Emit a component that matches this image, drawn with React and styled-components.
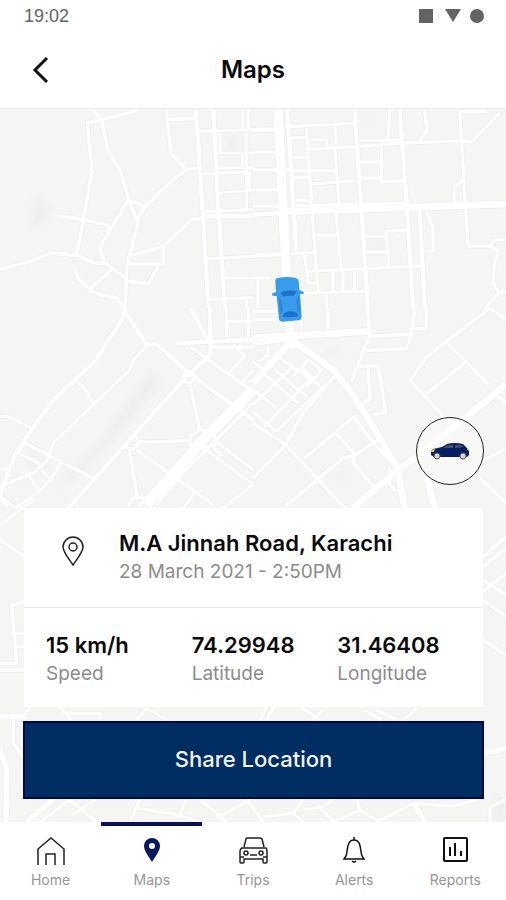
import React from "react";
import styled, { createGlobalStyle } from "styled-components";

const GlobalStyle = createGlobalStyle`
  * {
    box-sizing: border-box;
  }

  body {
    margin: 0;
    background: #fff;
    color: #0b0b0b;
    font-family: Inter, "Open Sans", sans-serif;
  }
`;

const Screen = styled.div`
  display: flex;
  flex-direction: column;
  min-height: 100vh;
`;

const StatusBar = styled.div`
  display: flex;
  justify-content: space-between;
  align-items: center;
  height: 32px;
  padding: 0 20px 0 24px;
  color: #636363;
  font: 18px "Liberation Sans", sans-serif;
`;

const Header = styled.header`
  display: grid;
  grid-template-columns: 48px 1fr 48px;
  align-items: center;
  height: 77px;
  padding: 0 16px;
  border-bottom: 1px solid #ececec;
`;

const BackButton = styled.button`
  display: flex;
  justify-content: center;
  align-items: center;
  height: 48px;
  padding: 0;
  border: 0;
  background: none;
`;

const Title = styled.h1`
  margin: 0;
  font-size: 24px;
  font-weight: 600;
  line-height: 32px;
  text-align: center;
`;

const MapArea = styled.main`
  position: relative;
  display: flex;
  flex: 1;
  flex-direction: column;
  justify-content: flex-end;
  min-height: 560px;
  padding: 0 22px 23px 23px;
  background: #f5f6f4;
`;

const MapCanvas = styled.svg`
  position: absolute;
  top: 0;
  left: 0;
  width: 100%;
  height: 100%;
`;

const VehicleButton = styled.button`
  position: relative;
  align-self: flex-end;
  display: flex;
  justify-content: center;
  align-items: center;
  width: 68px;
  height: 68px;
  margin-bottom: 23px;
  padding: 0;
  border: 1px solid #222;
  border-radius: 50%;
  background: rgba(255, 255, 255, 0.3);
`;

const Card = styled.section`
  position: relative;
  margin: 0 1px 14px;
  background: #fff;
`;

const Place = styled.div`
  display: flex;
  align-items: flex-start;
  height: 100px;
  padding: 20px 22px;
  border-bottom: 1px solid #ececec;
`;

const PlaceIcon = styled.div`
  width: 73px;
  padding: 8px 0 0 16px;
`;

const Stats = styled.dl`
  display: grid;
  grid-template-columns: repeat(3, 1fr);
  height: 99px;
  margin: 0;
  padding: 22px 0 0 22px;
`;

const Stat = styled.div`
  display: flex;
  flex-direction: column-reverse;
  justify-content: flex-end;
`;

const Name = styled.h2`
  margin: 0;
  font-size: 22px;
  font-weight: 600;
  line-height: 30px;
`;

const Value = styled.dd`
  margin: 0;
  font-size: 22px;
  font-weight: 600;
  line-height: 30px;
`;

const Label = styled.dt`
  color: #8c8c8c;
  font-size: 19px;
  line-height: 28px;
`;

const Time = styled.p`
  margin: 0;
  color: #8c8c8c;
  font-size: 19px;
  line-height: 28px;
`;

const ShareButton = styled.button`
  position: relative;
  height: 78px;
  padding: 0 0 2px;
  border: 2px solid #00064f;
  background: #002d62;
  color: #f1f4fb;
  font-family: inherit;
  font-size: 22px;
  font-weight: 500;
`;

const Nav = styled.nav`
  position: relative;
  display: grid;
  grid-template-columns: repeat(5, 1fr);
  height: 78px;
  background: #fff;
`;

const NavLink = styled.a`
  display: flex;
  flex-direction: column;
  align-items: center;
  padding-top: 10px;
  border-top: 4px solid ${props => (props.$active ? "#0b1157" : "transparent")};
  color: #969696;
  font-size: 14px;
  line-height: 20px;
  text-decoration: none;

  svg {
    margin-bottom: 4px;
  }
`;

// Streets are kept per tile, each with its own origin on the map.
const tiles = [
  {
    x: 0,
    y: 0,
    roads: [
      [10, "M410 8L304 36L262 44L276 190L250 335L230 440M280 8L304 36L325 130L362 190L386 275L408 330L414 345L380 475L376 600M180 324L250 335L320 350L330 360M386 275L298 420L315 465L376 510M395 278L434 296L412 335M0 484L75 465L155 435L230 442L282 466L315 465M225 484L235 510L268 545L300 560L350 570L374 600M268 545L335 485M500 8L512 135L560 185L600 180M504 34L588 32M560 185L525 210L434 296M390 444L490 415L575 335L610 330M490 415V468H384M475 475L446 527L384 520"],
      [12, "M588 8L608 310L625 600M640 8L655 300L675 600M608 325H760"],
      [8, "M596 70L760 65M727 8V60M745 8V60M660 78V130M738 80L740 300M655 135H760M655 180L760 178M605 198L745 192M655 255L760 246M608 312L760 304M620 452L760 445M675 510H760M630 575L760 568M740 575V600M728 135V178M748 192V246"]
    ]
  },
  {
    x: 759,
    y: 0,
    roads: [
      [28, "M75 8L90 300L112 720"],
      [20, "M85 311L470 298L759 288"],
      [12, "M103 8L130 430M305 8L325 300L345 600M440 8L462 295L480 600M0 66L75 64M0 320L85 316M0 443L100 438M500 305L515 600"],
      [9, "M95 56L305 46M160 60L195 550M245 56L250 115M210 95H175M220 95V120M110 90L165 88M165 124L310 116L440 106L625 98L655 102L740 15M410 8L405 100M320 98L440 96M515 8L522 68L498 100M620 8L645 415L712 414L725 395H759M625 10H700M120 150L170 148M115 188L245 188M245 125L260 300M120 208H170M175 228L300 218M125 278H175M320 162H385M385 118V222L455 218M320 210H385M130 293L460 286M630 210L602 245L604 285M520 310L540 355V430H515M190 382H255M250 318L265 485M115 438L190 432M155 440L165 525H190M165 490L505 474M335 385H400V370L460 366M400 380L408 475M340 432H400M240 490V550M270 490V550M305 488V550M150 556L340 550M220 560V600M712 414L738 432L725 460L720 520L738 555L759 550M738 555L695 600M0 132H75M0 185H115M0 245H75M0 295H80M0 510H50M15 510V600"]
    ]
  },
  {
    x: 0,
    y: 600,
    roads: [
      [12, "M374 0L368 30L285 160L160 275L95 365L45 440L0 560M374 8L440 110L470 108L565 195L759 335M530 106L759 95M565 200L205 600M630 0L632 140L565 200M572 0L625 100"],
      [32, "M759 245L610 395L440 590"],
      [9, "M440 115L405 150L385 190L280 290L160 405L140 460L100 495L0 535M228 215L260 250L282 290M0 326L25 324L95 362M70 402L285 515M50 432L125 470M75 402L55 435M125 485L150 515L120 550L45 600M80 495L115 545M185 460L150 520M0 482H25M0 565L40 595M570 230L600 370M420 402L565 398M410 425L640 590M388 425L412 570M572 118L759 250M632 118H759M680 200L735 145L700 110M720 230L759 185M680 0V90M745 0V90M680 40H759M759 285L545 500L470 590M735 290L540 460L420 590M640 395L759 485M610 420L759 530L670 600M550 600L585 555M640 420L665 440L650 450M570 385L600 365L640 375L650 410L610 420L570 410ZM390 395L405 382L418 402L400 425L375 418ZM550 200L570 190L590 205L570 225L548 220ZM385 590L400 570L440 570L445 590"]
    ]
  },
  {
    x: 759,
    y: 600,
    roads: [
      [20, "M115 95L240 185L285 240L345 330L435 485L455 600M0 90L350 70M115 100L0 225M435 485L300 600M435 485L500 440L759 230M520 500L545 600"],
      [10, "M345 0L350 82L295 220M0 108L115 95M350 85L475 78L485 0M520 0V62H485M475 80L460 122L340 128M320 175L375 172L398 312L362 320M345 180L352 270L330 285M710 0L578 102L515 152L472 218L590 345M580 102L705 228M635 165L520 258M710 0L759 35M735 265L759 285M245 205L150 315L98 410L0 510M0 345L98 410L275 600M98 595L270 450L300 445L375 395M155 450L310 320M250 375L305 440L300 462L360 535M300 325L345 385L435 485M410 480V530L430 550M670 470L759 420M670 500L759 585"],
      [9, "M0 290L120 175M35 355L180 205M70 370L245 205M75 145L215 245M30 195L135 285M0 245L70 300M0 160L35 190M0 310L70 370M65 185L165 270M45 120V140L20 160M120 205L165 155L205 185L165 235M145 180L185 215M70 145L110 105M145 0V75M225 0V75M0 35H75M0 10H80"]
    ]
  },
  {
    x: 0,
    y: 1176,
    roads: [
      [10, "M0 120L75 170M0 75L100 0M35 315L50 490H0M35 315L75 305M45 400H75M50 440H75M1450 170L1518 110M1450 200L1518 145M1450 240L1518 285M1450 275L1518 220M1450 300L1518 350M1450 420L1518 465M0 510H75M0 0L25 20"]
    ]
  },
  {
    x: 0,
    y: 1776,
    roads: [
      [16, "M0 150L20 205L18 366M80 366L160 298M1240 310L1275 366M1450 160L1518 145M0 50H75"],
      [9, "M40 50V130L75 180M75 45L90 20M180 20L215 60M185 40H300V60M410 60L440 25L505 60M780 60L800 20M800 60L820 20M900 20L960 60M940 60L970 30M1090 30L1145 60M1130 30L1190 60M1210 60L1250 25M120 366L210 300L290 366M215 345L290 298M390 366L420 298M415 325L540 345L560 298M530 345L600 366M600 298L680 366M650 355L750 298M740 300L790 366M790 350L880 340L910 298M880 340L910 366M910 330L960 320L1000 366M970 320L1000 298M1000 366L1080 330L1070 298M1080 330L1140 366M1130 366L1240 310L1360 318L1440 298M1470 366V320L1518 298"]
    ]
  }
];

const stats = [
  { label: "Speed", value: "15 km/h" },
  { label: "Latitude", value: "74.29948" },
  { label: "Longitude", value: "31.46408" }
];

const renderRoads = (color, extraWidth) =>
  tiles.map(tile => (
    <g
      key={`${tile.x}-${tile.y}`}
      stroke={color}
      transform={`translate(${tile.x} ${tile.y})`}
    >
      {tile.roads.map(([width, d]) => (
        <path key={d} d={d} strokeWidth={width + extraWidth} />
      ))}
    </g>
  ));

const StreetMap = () => (
  <MapCanvas
    viewBox="0 3 1518 2139"
    preserveAspectRatio="xMidYMax slice"
    aria-hidden="true"
  >
    <defs>
      <filter id="haze" x="-50%" y="-50%" width="200%" height="200%">
        <feGaussianBlur stdDeviation="12" />
      </filter>
    </defs>
    <g fill="#eceeed" filter="url(#haze)">
      <path d="M105 260L160 300L90 370Z" />
      <path d="M455 785L485 820L330 1000L220 1110L160 1150L300 1000Z" />
      <path d="M680 95H720V120H680ZM1090 15H1120V30H1090ZM1115 400H1150V420H1115ZM980 730L1010 725L1015 745L985 750ZM1010 1095H1040V1115H1010Z" />
      <path d="M1480 2070H1518V2142H1480ZM75 1060L130 1040L110 1090Z" />
    </g>
    <g fill="none" strokeLinejoin="round">
      {renderRoads("#eff1ef", 6)}
      {renderRoads("#fff", 0)}
    </g>
    <g transform="translate(813 504)">
      <path d="M13 12Q14 6 24 5Q50 1 72 5Q81 6 83 14L85 42L98 48V54L87 54L92 122Q91 132 82 133L36 137Q25 137 24 128L17 60L4 59V52L15 48Z" fill="#389ced" />
      <path d="M28 50Q50 40 78 46L67 60Q50 57 38 62Z" fill="#1b72c8" />
      <path d="M34 122Q38 108 56 106Q76 105 84 120Q58 126 34 122Z" fill="#1b72c8" />
      <path d="M22 62L33 76L35 106L28 116ZM84 58L76 72L79 102L87 112Z" fill="#2a88de" />
    </g>
  </MapCanvas>
);

const CarPicture = () => (
  <svg width="40" height="18" viewBox="0 0 40 18">
    <path d="M1 9L3 7L12 5L17 2Q24 0 33 2L37 6L39 9V13L37 15H4L1 13Z" fill="#061d63" />
    <path d="M14 5L18 3H23V6H14ZM25 3H31L34 5L25 6Z" fill="#49505e" />
    <path d="M1 8L5 7L4 10L1 10ZM37 6L39 8H37Z" fill="#e4c251" />
    <g fill="#d8d8d8" stroke="#555" strokeWidth="1">
      <circle cx="7" cy="14" r="3" />
      <circle cx="33" cy="14" r="3" />
    </g>
  </svg>
);

const icons = {
  home: (
    <path d="M2 29V13L15 2L28 13V29M10 29V18H19V29" fill="none" stroke="#222" strokeWidth="1.5" />
  ),
  maps: (
    <path
      d="M15 2A8 8 0 0 0 7 10C7 15 12 21 15 26C18 21 23 15 23 10A8 8 0 0 0 15 2ZM15 7A3 3 0 1 1 15 13A3 3 0 0 1 15 7Z"
      fill="#05185f"
      fillRule="evenodd"
    />
  ),
  trips: (
    <g fill="none" stroke="#222" strokeWidth="1.5">
      <path d="M6 11L8 3Q8 2 9 2H22Q23 2 24 3L26 11M3 12H28Q29 13 29 15V26Q29 27 28 27H26Q25 27 25 26V23H6V26Q6 27 5 27H3Q2 27 2 26V15Q2 13 4 12" />
      <path d="M12 19H19M2 21H6M25 21H29" />
      <circle cx="8" cy="17" r="2" />
      <circle cx="23" cy="17" r="2" />
    </g>
  ),
  alerts: (
    <g fill="none" stroke="#111" strokeWidth="1.5">
      <path d="M15 1V4M7 20C9 16 7 4 15 4S21 16 23 20L25 23H5L7 20Z" />
      <path d="M13 25Q15 27 17 25" />
    </g>
  ),
  reports: (
    <g fill="none" stroke="#111" strokeWidth="2">
      <rect x="4" y="2" width="23" height="23" rx="1" />
      <path d="M10 11V20M15 7V20M21 15V20" />
    </g>
  )
};

const tabs = [
  { id: "home", name: "Home" },
  { id: "maps", name: "Maps" },
  { id: "trips", name: "Trips" },
  { id: "alerts", name: "Alerts" },
  { id: "reports", name: "Reports" }
];

const renderTab = tab => (
  <NavLink key={tab.id} href={`#${tab.id}`} $active={tab.id === "maps"}>
    <svg width="30" height="30" viewBox="0 0 30 30">
      {icons[tab.id]}
    </svg>
    {tab.name}
  </NavLink>
);

const renderStat = stat => (
  <Stat key={stat.label}>
    <Label>{stat.label}</Label>
    <Value>{stat.value}</Value>
  </Stat>
);

export default () => (
  <Screen>
    <GlobalStyle />
    <StatusBar>
      <span>19:02</span>
      <svg width="68" height="16" viewBox="0 0 68 16" fill="#636363">
        <path d="M1 1H15V15H1ZM27 1H43L35 14Z" />
        <circle cx="59" cy="8" r="7" />
      </svg>
    </StatusBar>
    <Header>
      <BackButton aria-label="Back">
        <svg width="18" height="28" viewBox="0 0 18 28">
          <path d="M16 2L4 14L16 26" fill="none" stroke="#111" strokeWidth="3" />
        </svg>
      </BackButton>
      <Title>Maps</Title>
    </Header>
    <MapArea>
      <StreetMap />
      <VehicleButton aria-label="Show vehicle">
        <CarPicture />
      </VehicleButton>
      <Card>
        <Place>
          <PlaceIcon>
            <svg width="22" height="30" viewBox="0 0 22 30" fill="none" stroke="#222" strokeWidth="1.5">
              <path d="M11 1A10 10 0 0 0 1 11C1 16 7 23 11 29C15 23 21 16 21 11A10 10 0 0 0 11 1Z" />
              <circle cx="11" cy="11" r="4" />
            </svg>
          </PlaceIcon>
          <div>
            <Name>M.A Jinnah Road, Karachi</Name>
            <Time>28 March 2021 - 2:50PM</Time>
          </div>
        </Place>
        <Stats>{stats.map(renderStat)}</Stats>
      </Card>
      <ShareButton>Share Location</ShareButton>
    </MapArea>
    <Nav>{tabs.map(renderTab)}</Nav>
  </Screen>
);
